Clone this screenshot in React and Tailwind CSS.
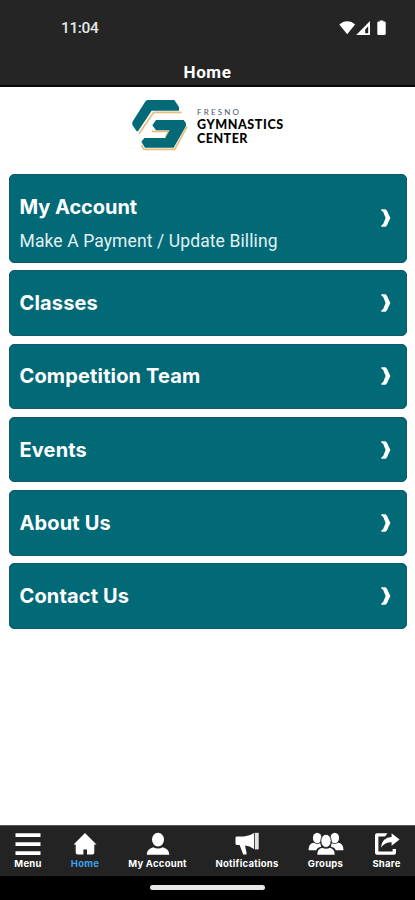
import React from 'react';

const links = [
  { title: 'My Account', subtitle: 'Make A Payment / Update Billing' },
  { title: 'Classes' },
  { title: 'Competition Team' },
  { title: 'Events' },
  { title: 'About Us' },
  { title: 'Contact Us' },
];

const StatusBar = () => (
  <div className="flex h-[57px] items-center justify-between pl-[61px] pr-[28px]">
    <span className="font-[Roboto] text-[15.5px] font-medium tracking-[-0.4px] text-gray-200">11:04</span>
    <svg className="mt-[-1px] h-4 w-12" viewBox="0 0 48 16" fill="#fff">
      <path d="M0.3 4.6C4.8 0 11.8 0 16.1 4.6L8.2 14.2Z" />
      <path fillRule="evenodd" d="M31 1v14H17.2ZM29.2 6.2L26.2 9.4v3.8h3Z" />
      <path d="M39.5 1.5h1.2V.4h3.6v1.1h1.2q1.2 0 1.2 1.2v11q0 1.3-1.2 1.3h-6q-1.2 0-1.2-1.3v-11q0-1.2 1.2-1.2Z" />
    </svg>
  </div>
);

const Logo = () => (
  <div className="flex h-[87px] pl-[130px] pt-[12px]">
    <svg className="h-[54px] w-[60px] shrink-0" viewBox="0 0 180 162">
      <g fill="none" stroke="#e8bb78" strokeWidth="5">
        <path d="M155 40H71L27 104" />
        <path d="M66 97h50L107 114" />
        <path d="M171 83L134 151H42L34 138" />
      </g>
      <g fill="#046a78">
        <path d="M52 3H133L147 24V35H65L24 97H20L7 78V69L47 6Z" />
        <path d="M78 63H161L168 73V81L131 146H45L34 128L43 117H106L119 94H78L67 79Z" />
      </g>
    </svg>
    <div className="ml-[7px] mt-[8px] font-[Lato]">
      <div className="text-[8px] leading-[10px] tracking-[2.2px] text-gray-600">FRESNO</div>
      <div className="mt-[1px] whitespace-nowrap text-[12.5px] font-black leading-[14px] tracking-[0.6px] text-black">
        GYMNASTICS
      </div>
      <div className="text-[12.5px] font-black leading-[14px] tracking-[0.5px] text-black">CENTER</div>
    </div>
  </div>
);

const LinkCard = ({ title, subtitle }) => (
  <button
    className={`flex w-full items-center justify-between rounded-[5px] border border-[#14566a] bg-[#026977] pl-[9.5px] pr-[15px] text-left text-white ${
      subtitle ? 'h-[88.5px]' : 'h-[65.5px]'
    }`}
  >
    <span className={subtitle ? 'pt-[10px]' : ''}>
      <span className={`block text-[20px] font-bold leading-[26px] ${subtitle ? 'tracking-[-0.05px]' : 'tracking-[0.15px]'}`}>
        {title}
      </span>
      {subtitle && (
        <span className="mt-[9px] block font-[Roboto] text-[17.5px] leading-[24px] tracking-[0.11px] text-[#e2f1f3]">
          {subtitle}
        </span>
      )}
    </span>
    <svg className="h-[18px] w-[10px]" viewBox="0 0 10 18" fill="#fff">
      <path d="M0.3 0.3H4.6Q6.4 1.4 7.2 4.6L9.4 9L7.2 13.4Q6.4 16.6 4.6 17.7H0.3V16.4Q2.8 15.4 3.2 12.6L4.6 9L3.2 5.4Q2.8 2.6 0.3 1.6Z" />
    </svg>
  </button>
);

const MenuIcon = () => (
  <svg className="h-[24px] w-[26px]" viewBox="0 0 26 24" fill="#fff">
    <path d="M0.5 1.3h25v3.6h-25ZM0.5 10.3h25v3.6h-25ZM0.5 19.3h25v3.6h-25Z" />
  </svg>
);

const HomeIcon = () => (
  <svg className="h-[24px] w-[24px]" viewBox="0 0 24 24" fill="#fff">
    <path d="M12 1L23.5 12.4H21.3V20.5Q21.3 22.5 19.3 22.5H14V17.5H10.4V22.5H4.7Q2.7 22.5 2.7 20.5V12.4H0.5Z" />
  </svg>
);

const AccountIcon = () => (
  <svg className="h-[24px] w-[24px]" viewBox="0 0 24 24" fill="#fff">
    <ellipse cx="12" cy="7.6" rx="6" ry="6.8" />
    <path d="M0.7 22.7Q0.7 17 7.2 15.2Q12 18 16.8 15.2Q23.3 17 23.3 22.7Z" />
  </svg>
);

const MegaphoneIcon = () => (
  <svg className="h-[24px] w-[24px]" viewBox="0 0 24 24" fill="#fff">
    <path d="M0.5 5.8Q0.5 4.6 1.8 4.6H9Q14.5 4.2 19 1V17Q14.5 14 10 13.6L11.5 20.5V22.5H8.2L4.6 13H2Q0.5 13 0.5 11.5Z" />
    <path d="M19.8 0.8H23.7V17.4H19.8Z" fill="#e2e2e2" />
  </svg>
);

const GroupIcon = () => (
  <svg className="h-[24px] w-[36px]" viewBox="0 0 36 24" fill="#fff">
    <ellipse cx="9.2" cy="6" rx="4.3" ry="5.3" />
    <ellipse cx="26.8" cy="6" rx="4.3" ry="5.3" />
    <path d="M0.5 18.3Q0.3 11.8 5.6 10.8Q9 13 12.2 11Q13 14 13.2 14.8Q9 15.6 8.3 18.3Z" />
    <path d="M35.5 18.3Q35.7 11.8 30.4 10.8Q27 13 23.8 11Q23 14 22.8 14.8Q27 15.6 27.7 18.3Z" />
    <ellipse cx="18" cy="8.9" rx="5.2" ry="6.6" stroke="#232323" strokeWidth="0.9" />
    <path d="M9.3 22.7Q9.2 16.9 14.1 15.7Q18 18 21.9 15.7Q26.8 16.9 26.7 22.7Z" />
  </svg>
);

const ShareIcon = () => (
  <svg className="h-[24px] w-[26px]" viewBox="0 0 26 24" fill="#fff">
    <path d="M13.5 1.2H3Q1 1.2 1 3.2V20.8Q1 22.8 3 22.8H20Q22 22.8 22 20.8V17H18.6V19.4H4.4V4.6H11Z" />
    <path d="M17.6 1.2L25.6 7.4L17.6 13.8V10.2Q11.2 10 6.8 15.5Q8.2 5.3 17.6 4.9Z" />
  </svg>
);

const tabs = [
  { label: 'Menu', icon: MenuIcon, width: 'w-[56px]' },
  { label: 'Home', icon: HomeIcon, width: 'w-[58px]', active: true },
  { label: 'My Account', icon: AccountIcon, width: 'w-[87px]' },
  { label: 'Notifications', icon: MegaphoneIcon, width: 'w-[92px]' },
  { label: 'Groups', icon: GroupIcon, width: 'w-[65px]' },
  { label: 'Share', icon: ShareIcon, width: 'w-[57px]' },
];

const App = () => {
  return (
    <div className="flex h-[900px] w-[415px] flex-col bg-white font-[Inter,sans-serif]">
      <header className="h-[87px] border-b-2 border-[#090909] bg-[#252525]">
        <StatusBar />
        <h1 className="text-center font-[Roboto] text-[17px] font-bold leading-[30px] tracking-[0.6px] text-white">Home</h1>
      </header>

      <main className="flex-1">
        <Logo />
        <div className="flex flex-col gap-[7.8px] pl-[9px] pr-[8px]">
          {links.map((link) => (
            <LinkCard key={link.title} {...link} />
          ))}
        </div>
      </main>

      <nav className="flex h-[51px] border-t border-[#555] bg-[#232323] pt-[6px]">
        {tabs.map(({ label, icon: Icon, width, active }) => (
          <div key={label} className={`flex flex-col items-center ${width}`}>
            <Icon />
            <span
              className={`mt-[2px] whitespace-nowrap text-[9.5px] font-bold leading-[12px] tracking-[0.25px] ${
                active ? 'text-[#3da0e8]' : 'text-white'
              }`}
            >
              {label}
            </span>
          </div>
        ))}
      </nav>
      <div className="flex h-[24px] justify-center bg-black pt-[9px]">
        <div className="h-[5px] w-[115px] rounded-full bg-[#e6e6e6]" />
      </div>
    </div>
  );
};

export default App;
